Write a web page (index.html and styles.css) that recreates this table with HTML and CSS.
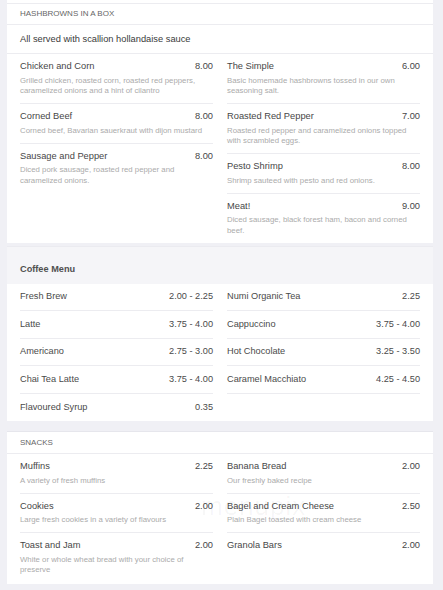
FILE: index.html
```html
<!DOCTYPE html>
<html>
<head>
<meta charset="utf-8">
<link rel="stylesheet" href="styles.css">
</head>
<body>
<div class="page">
  <section class="card card--cut">
    <div class="cat-title">HASHBROWNS IN A BOX</div>
    <div class="cat-note">All served with scallion hollandaise sauce</div>
    <div class="cols">
      <div class="col">
        <div class="item"><div class="line"><span>Chicken and Corn</span><span>8.00</span></div><p class="desc">Grilled chicken, roasted corn, roasted red peppers, caramelized onions and a hint of cilantro</p></div>
        <div class="item"><div class="line"><span>Corned Beef</span><span>8.00</span></div><p class="desc">Corned beef, Bavarian sauerkraut with dijon mustard</p></div>
        <div class="item"><div class="line"><span>Sausage and Pepper</span><span>8.00</span></div><p class="desc">Diced pork sausage, roasted red pepper and caramelized onions.</p></div>
      </div>
      <div class="col">
        <div class="item"><div class="line"><span>The Simple</span><span>6.00</span></div><p class="desc">Basic homemade hashbrowns tossed in our own seasoning salt.</p></div>
        <div class="item"><div class="line"><span>Roasted Red Pepper</span><span>7.00</span></div><p class="desc">Roasted red pepper and caramelized onions topped with scrambled eggs.</p></div>
        <div class="item"><div class="line"><span>Pesto Shrimp</span><span>8.00</span></div><p class="desc">Shrimp sauteed with pesto and red onions.</p></div>
        <div class="item"><div class="line"><span>Meat!</span><span>9.00</span></div><p class="desc">Diced sausage, black forest ham, bacon and corned beef.</p></div>
      </div>
    </div>
  </section>

  <section class="card card--coffee">
    <div class="coffee-head">Coffee Menu</div>
    <div class="cols">
      <div class="col">
        <div class="row"><span>Fresh Brew</span><span>2.00 - 2.25</span></div>
        <div class="row"><span>Latte</span><span>3.75 - 4.00</span></div>
        <div class="row"><span>Americano</span><span>2.75 - 3.00</span></div>
        <div class="row"><span>Chai Tea Latte</span><span>3.75 - 4.00</span></div>
        <div class="row"><span>Flavoured Syrup</span><span>0.35</span></div>
      </div>
      <div class="col">
        <div class="row"><span>Numi Organic Tea</span><span>2.25</span></div>
        <div class="row"><span>Cappuccino</span><span>3.75 - 4.00</span></div>
        <div class="row"><span>Hot Chocolate</span><span>3.25 - 3.50</span></div>
        <div class="row"><span>Caramel Macchiato</span><span>4.25 - 4.50</span></div>
      </div>
    </div>
  </section>

  <section class="card card--snacks">
    <div class="cat-title">SNACKS</div>
    <div class="cols">
      <div class="col">
        <div class="item"><div class="line"><span>Muffins</span><span>2.25</span></div><p class="desc">A variety of fresh muffins</p></div>
        <div class="item"><div class="line"><span>Cookies</span><span>2.00</span></div><p class="desc">Large fresh cookies in a variety of flavours</p></div>
        <div class="item"><div class="line"><span>Toast and Jam</span><span>2.00</span></div><p class="desc">White or whole wheat bread with your choice of preserve</p></div>
      </div>
      <div class="col">
        <div class="item"><div class="line"><span>Banana Bread</span><span>2.00</span></div><p class="desc">Our freshly baked recipe</p></div>
        <div class="item"><div class="line"><span>Bagel and Cream Cheese</span><span>2.50</span></div><p class="desc">Plain Bagel toasted with cream cheese</p></div>
        <div class="item"><div class="line"><span>Granola Bars</span><span>2.00</span></div></div>
      </div>
    </div>
    <div class="watermark" aria-hidden="true">menupix</div>
  </section>
</div>
</body>
</html>
```
FILE: styles.css
```css
* { box-sizing: border-box; }
html, body { margin: 0; padding: 0; }
body {
  background: #f0f0f5;
  font-family: "Liberation Sans", Arial, sans-serif;
  color: #333;
}
.page {
  width: 443px;
  height: 590px;
  overflow: hidden;
  padding: 0 10px 0 7px;
  display: flex;
  flex-direction: column;
}
.card {
  background: #fff;
  position: relative;
}
.card--cut { padding-top: 3px; }
.cat-title {
  font-size: 8px;
  color: #666;
  line-height: 20px;
  height: 22px;
  padding: 0 13px;
  border-top: 1px solid #ececf0;
  border-bottom: 1px solid #ececf0;
}
.card--snacks .cat-title { border-top: 1px solid #e6e6ec; height: 23px; line-height: 21px; }
.cat-note {
  font-size: 9.3px;
  color: #3a3a3a;
  height: 29px;
  line-height: 28px;
  padding: 0 13px;
  border-bottom: 1px solid #ececf0;
}
.cols {
  display: grid;
  grid-template-columns: 1fr 1fr;
  column-gap: 14px;
  padding: 0 13px;
}
.col { display: flex; flex-direction: column; min-width: 0; }
.item {
  padding: 6px 0 6.5px;
  border-bottom: 1px solid #ececf0;
}
.item:last-child { border-bottom: none; }
.line {
  display: flex;
  justify-content: space-between;
  font-size: 9.3px;
  line-height: 13px;
  color: #474747;
}
.desc {
  margin: 2.5px 0 0;
  font-size: 7.8px;
  line-height: 10.5px;
  color: #ababab;
}
.card--coffee { margin-top: 3px; }
.coffee-head {
  background: #f5f5f8;
  height: 38px;
  padding: 16px 13px 0;
  font-size: 9.2px;
  font-weight: bold;
  color: #505050;
  line-height: 13px;
  border-top: 1px solid #ebebf0;
}
.row {
  display: flex;
  justify-content: space-between;
  align-items: center;
  height: 27.5px;
  padding-bottom: 1px;
  font-size: 9.2px;
  color: #4a4a4a;
  border-bottom: 1px solid #ececf0;
}
.col > .row:last-child { border-bottom: none; }
.card--coffee .col:last-child .row:last-child { border-bottom: 1px solid #ececf0; }
.card--snacks { margin-top: 10px; height: 153px; }
.watermark {
  position: absolute;
  left: 194px;
  top: 60px;
  font-size: 26px;
  color: rgba(0,0,0,0.04);
  letter-spacing: 1px;
  pointer-events: none;
}
```
